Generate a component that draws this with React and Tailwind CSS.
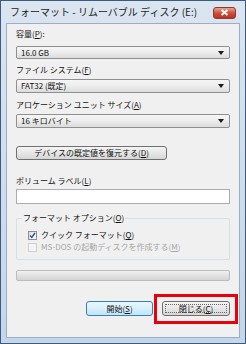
import React from 'react'

const font = { fontFamily: '"Noto Sans CJK JP", "Noto Sans", sans-serif' }

function Key({ k }) {
  return (
    <>
      (<span className="underline underline-offset-1">{k}</span>)
    </>
  )
}

function Label({ text, k, colon, className = '' }) {
  return (
    <div className={`h-[12px] leading-[12px] text-[8px] text-[#111] whitespace-pre ${className}`}>
      {text}
      <Key k={k} />
      {colon ? ':' : ''}
    </div>
  )
}

function Select({ value, className = '' }) {
  return (
    <div
      className={`flex items-center justify-between rounded-[2px] border border-[#8e8f8f] bg-gradient-to-b from-[#f6f6f6] via-[#ececec] to-[#dcdcdc] pl-[4px] pr-[5px] text-[8px] text-[#111] ${className}`}
    >
      <span className="leading-none">{value}</span>
      <svg width="6" height="4" viewBox="0 0 6 4">
        <path d="M0 0 H6 L3 4 Z" fill="#1a1a1a" />
      </svg>
    </div>
  )
}

function Check({ checked, disabled, children }) {
  return (
    <div className="flex h-[12px] items-center gap-[4px] pl-[6px]">
      <div
        className={`flex h-[9px] w-[9px] items-center justify-center border ${
          disabled ? 'border-[#d0d0d0] bg-[#f4f4f4]' : 'border-[#8f8f8f] bg-gradient-to-br from-[#dcdcdc] to-white'
        }`}
      >
        {checked && (
          <svg width="7" height="7" viewBox="0 0 7 7">
            <path d="M1 3.5 L2.8 5.5 L6 1" fill="none" stroke="#2a4fa8" strokeWidth="1.4" />
          </svg>
        )}
      </div>
      <span className={`text-[8px] leading-[12px] whitespace-nowrap ${disabled ? 'text-[#a7a7a7]' : 'text-[#111]'}`}>
        {children}
      </span>
    </div>
  )
}

export default function App() {
  return (
    <div style={font} className="w-[246px] h-[344px] overflow-hidden">
      <div className="flex h-full w-full flex-col border border-[#3d5b7e] bg-gradient-to-b from-[#dae5f0] to-[#c4d7ea]">
        {/* title bar */}
        <div className="flex h-[22px] shrink-0 items-center justify-between pl-[9px] pr-[9px]">
          <span className="text-[10px] leading-none text-[#1c1c1c] whitespace-nowrap">
            フォーマット - リムーバブル ディスク (E:)
          </span>
          <div className="mt-[1px] flex h-[12px] w-[23px] items-center justify-center rounded-[3px] border border-[#8a3a30] bg-gradient-to-b from-[#e7a392] via-[#cf4d3a] to-[#b8331f]">
            <svg width="9" height="7" viewBox="0 0 9 7">
              <path d="M1.5 1 L7.5 6 M7.5 1 L1.5 6" stroke="white" strokeWidth="2" />
            </svg>
          </div>
        </div>

        {/* body */}
        <div className="flex flex-1 px-[5px] pb-[5px]">
          <div className="flex flex-1 flex-col border border-[#9aafc5] bg-[#f0f0f0] px-[9px] pt-[4px]">
            <Label text="容量" k="P" colon />
            <Select value="16.0 GB" className="mt-[6px] h-[13px]" />

            <Label text="ファイル システム" k="F" className="mt-[5px]" />
            <Select value="FAT32 (既定)" className="mt-[3px] h-[14px]" />

            <Label text="アロケーション ユニット サイズ" k="A" className="mt-[6px]" />
            <Select value="16 キロバイト" className="mt-[3px] h-[14px]" />

            <button className="mt-[18px] flex h-[14px] w-[151px] items-center justify-center rounded-[3px] border border-[#707070] bg-gradient-to-b from-[#f4f4f4] via-[#e6e6e6] to-[#d6d6d6] text-[8px] text-[#111] whitespace-nowrap">
              デバイスの既定値を復元する<Key k="D" />
            </button>

            <Label text="ボリューム ラベル" k="L" className="mt-[15px]" />
            <div className="mt-[2px] h-[15px] border border-[#abadb3] bg-white" />

            <fieldset className="mt-[8px] rounded-[2px] border border-[#d5dfe5] pb-[6px] pl-[5px]">
              <legend className="px-[1px] text-[8px] leading-[12px] text-[#111] whitespace-nowrap">
                フォーマット オプション<Key k="O" />
              </legend>
              <div className="mt-[5px] flex flex-col">
                <Check checked>
                  クイック フォーマット<Key k="Q" />
                </Check>
                <Check disabled>
                  MS-DOS の起動ディスクを作成する<Key k="M" />
                </Check>
              </div>
            </fieldset>

            <div className="mt-[10px] h-[11px] rounded-[2px] border border-[#bcbcbc] bg-gradient-to-b from-[#f0f0f0] via-[#e2e2e2] to-[#d4d4d4]" />

            <div className="mt-[20px] flex justify-end gap-[9px]">
              <button className="flex h-[15px] w-[67px] items-center justify-center rounded-[3px] border border-[#3c7fb1] bg-gradient-to-b from-[#eaf6fd] via-[#d9f0fc] to-[#bee6fd] text-[8px] text-[#111]">
                開始<Key k="S" />
              </button>
              <div className="relative">
                <div className="flex h-[15px] w-[68px] rounded-[3px] border border-[#707070] bg-gradient-to-b from-[#f4f4f4] via-[#e6e6e6] to-[#d6d6d6] p-[2px] text-[8px] text-[#111]">
                  <div className="flex flex-1 items-center justify-center border border-dotted border-[#666] leading-none whitespace-nowrap">
                    閉じる<Key k="C" />
                  </div>
                </div>
                <div className="absolute -left-[8px] -right-[8px] -top-[7px] -bottom-[8px] border-[3px] border-[#e8000b]" />
              </div>
            </div>
          </div>
        </div>
      </div>
    </div>
  )
}
